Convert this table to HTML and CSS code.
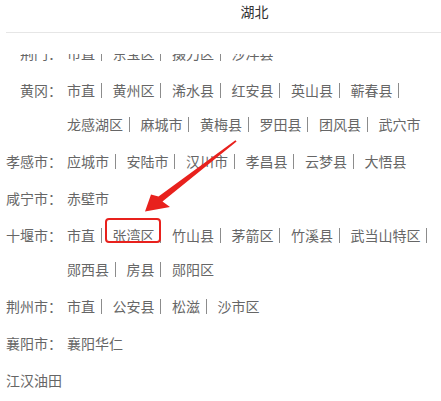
FILE: index.html
```html
<!DOCTYPE html>
<html lang="zh-CN">
<head>
<meta charset="utf-8">
<title>湖北</title>
<link rel="stylesheet" href="styles.css">
</head>
<body>
<div class="page">
  <header class="title"><span>湖北</span></header>
  <div class="viewport">
    <div class="list">
      <div class="group">
        <div class="label">荆门：</div>
        <div class="items">
          <span class="item">市直<i class="sep"></i></span>
          <span class="item">东宝区<i class="sep"></i></span>
          <span class="item">掇刀区<i class="sep"></i></span>
          <span class="item">沙洋县</span>
        </div>
      </div>
      <div class="group">
        <div class="label">黄冈：</div>
        <div class="items">
          <span class="item">市直<i class="sep"></i></span>
          <span class="item">黄州区<i class="sep"></i></span>
          <span class="item">浠水县<i class="sep"></i></span>
          <span class="item">红安县<i class="sep"></i></span>
          <span class="item">英山县<i class="sep"></i></span>
          <span class="item">蕲春县<i class="sep"></i></span>
          <span class="item">龙感湖区<i class="sep"></i></span>
          <span class="item">麻城市<i class="sep"></i></span>
          <span class="item">黄梅县<i class="sep"></i></span>
          <span class="item">罗田县<i class="sep"></i></span>
          <span class="item">团风县<i class="sep"></i></span>
          <span class="item">武穴市</span>
        </div>
      </div>
      <div class="group">
        <div class="label">孝感市：</div>
        <div class="items">
          <span class="item">应城市<i class="sep"></i></span>
          <span class="item">安陆市<i class="sep"></i></span>
          <span class="item">汉川市<i class="sep"></i></span>
          <span class="item">孝昌县<i class="sep"></i></span>
          <span class="item">云梦县<i class="sep"></i></span>
          <span class="item">大悟县</span>
        </div>
      </div>
      <div class="group">
        <div class="label">咸宁市：</div>
        <div class="items">
          <span class="item">赤壁市</span>
        </div>
      </div>
      <div class="group">
        <div class="label">十堰市：</div>
        <div class="items">
          <span class="item">市直<i class="sep"></i></span>
          <span class="item">张湾区<i class="sep"></i></span>
          <span class="item">竹山县<i class="sep"></i></span>
          <span class="item">茅箭区<i class="sep"></i></span>
          <span class="item">竹溪县<i class="sep"></i></span>
          <span class="item">武当山特区<i class="sep"></i></span>
          <span class="item">郧西县<i class="sep"></i></span>
          <span class="item">房县<i class="sep"></i></span>
          <span class="item">郧阳区</span>
        </div>
      </div>
      <div class="group">
        <div class="label">荆州市：</div>
        <div class="items">
          <span class="item">市直<i class="sep"></i></span>
          <span class="item">公安县<i class="sep"></i></span>
          <span class="item">松滋<i class="sep"></i></span>
          <span class="item">沙市区</span>
        </div>
      </div>
      <div class="group">
        <div class="label">襄阳市：</div>
        <div class="items">
          <span class="item">襄阳华仁</span>
        </div>
      </div>
      <div class="group">
        <div class="label">江汉油田</div>
        <div class="items"></div>
      </div>
    </div>
  </div>
  <svg class="annot" width="441" height="401" viewBox="0 0 441 401" aria-hidden="true">
    <rect x="106" y="219" width="54" height="23" rx="3" ry="3" fill="none" stroke="#e8211d" stroke-width="2"/>
    <polygon fill="#e8211d" points="145,211.5 170,207 162.5,201.5 236.6,141.6 235.4,140.2 158.5,196.5 151,194.5"/>
  </svg>
</div>
</body>
</html>
```
FILE: styles.css
```css
html, body {
  margin: 0;
  padding: 0;
  background: #ffffff;
}

body {
  font-family: "Noto Sans CJK SC", "Noto Sans", "Liberation Sans", sans-serif;
  font-size: 14px;
  color: #666666;
}

.page {
  position: relative;
  width: 441px;
  height: 401px;
  overflow: hidden;
}

.title {
  display: flex;
  justify-content: center;
  margin-left: 6px;
  padding: 0 0 10px 62px;
  line-height: 22px;
  color: #333333;
  border-bottom: 1px solid #e6e6e6;
}

.viewport {
  margin-top: 21px;
  height: 347px;
  overflow: hidden;
}

.list {
  margin-top: -18px;
}

.group {
  display: flex;
  align-items: flex-start;
  margin-bottom: 3px;
  line-height: 34px;
}

.label {
  flex: 0 0 56px;
  margin-left: 6px;
  text-align: right;
  white-space: nowrap;
}

.items {
  flex: 1;
  display: flex;
  flex-wrap: wrap;
  column-gap: 11px;
  margin-left: 5px;
}

.item {
  display: inline-flex;
  align-items: center;
  white-space: nowrap;
}

.sep {
  display: inline-block;
  width: 1px;
  height: 15px;
  margin-left: 5.5px;
  background: #8c8c8c;
}

.annot {
  position: absolute;
  left: 0;
  top: 0;
  pointer-events: none;
}
```
